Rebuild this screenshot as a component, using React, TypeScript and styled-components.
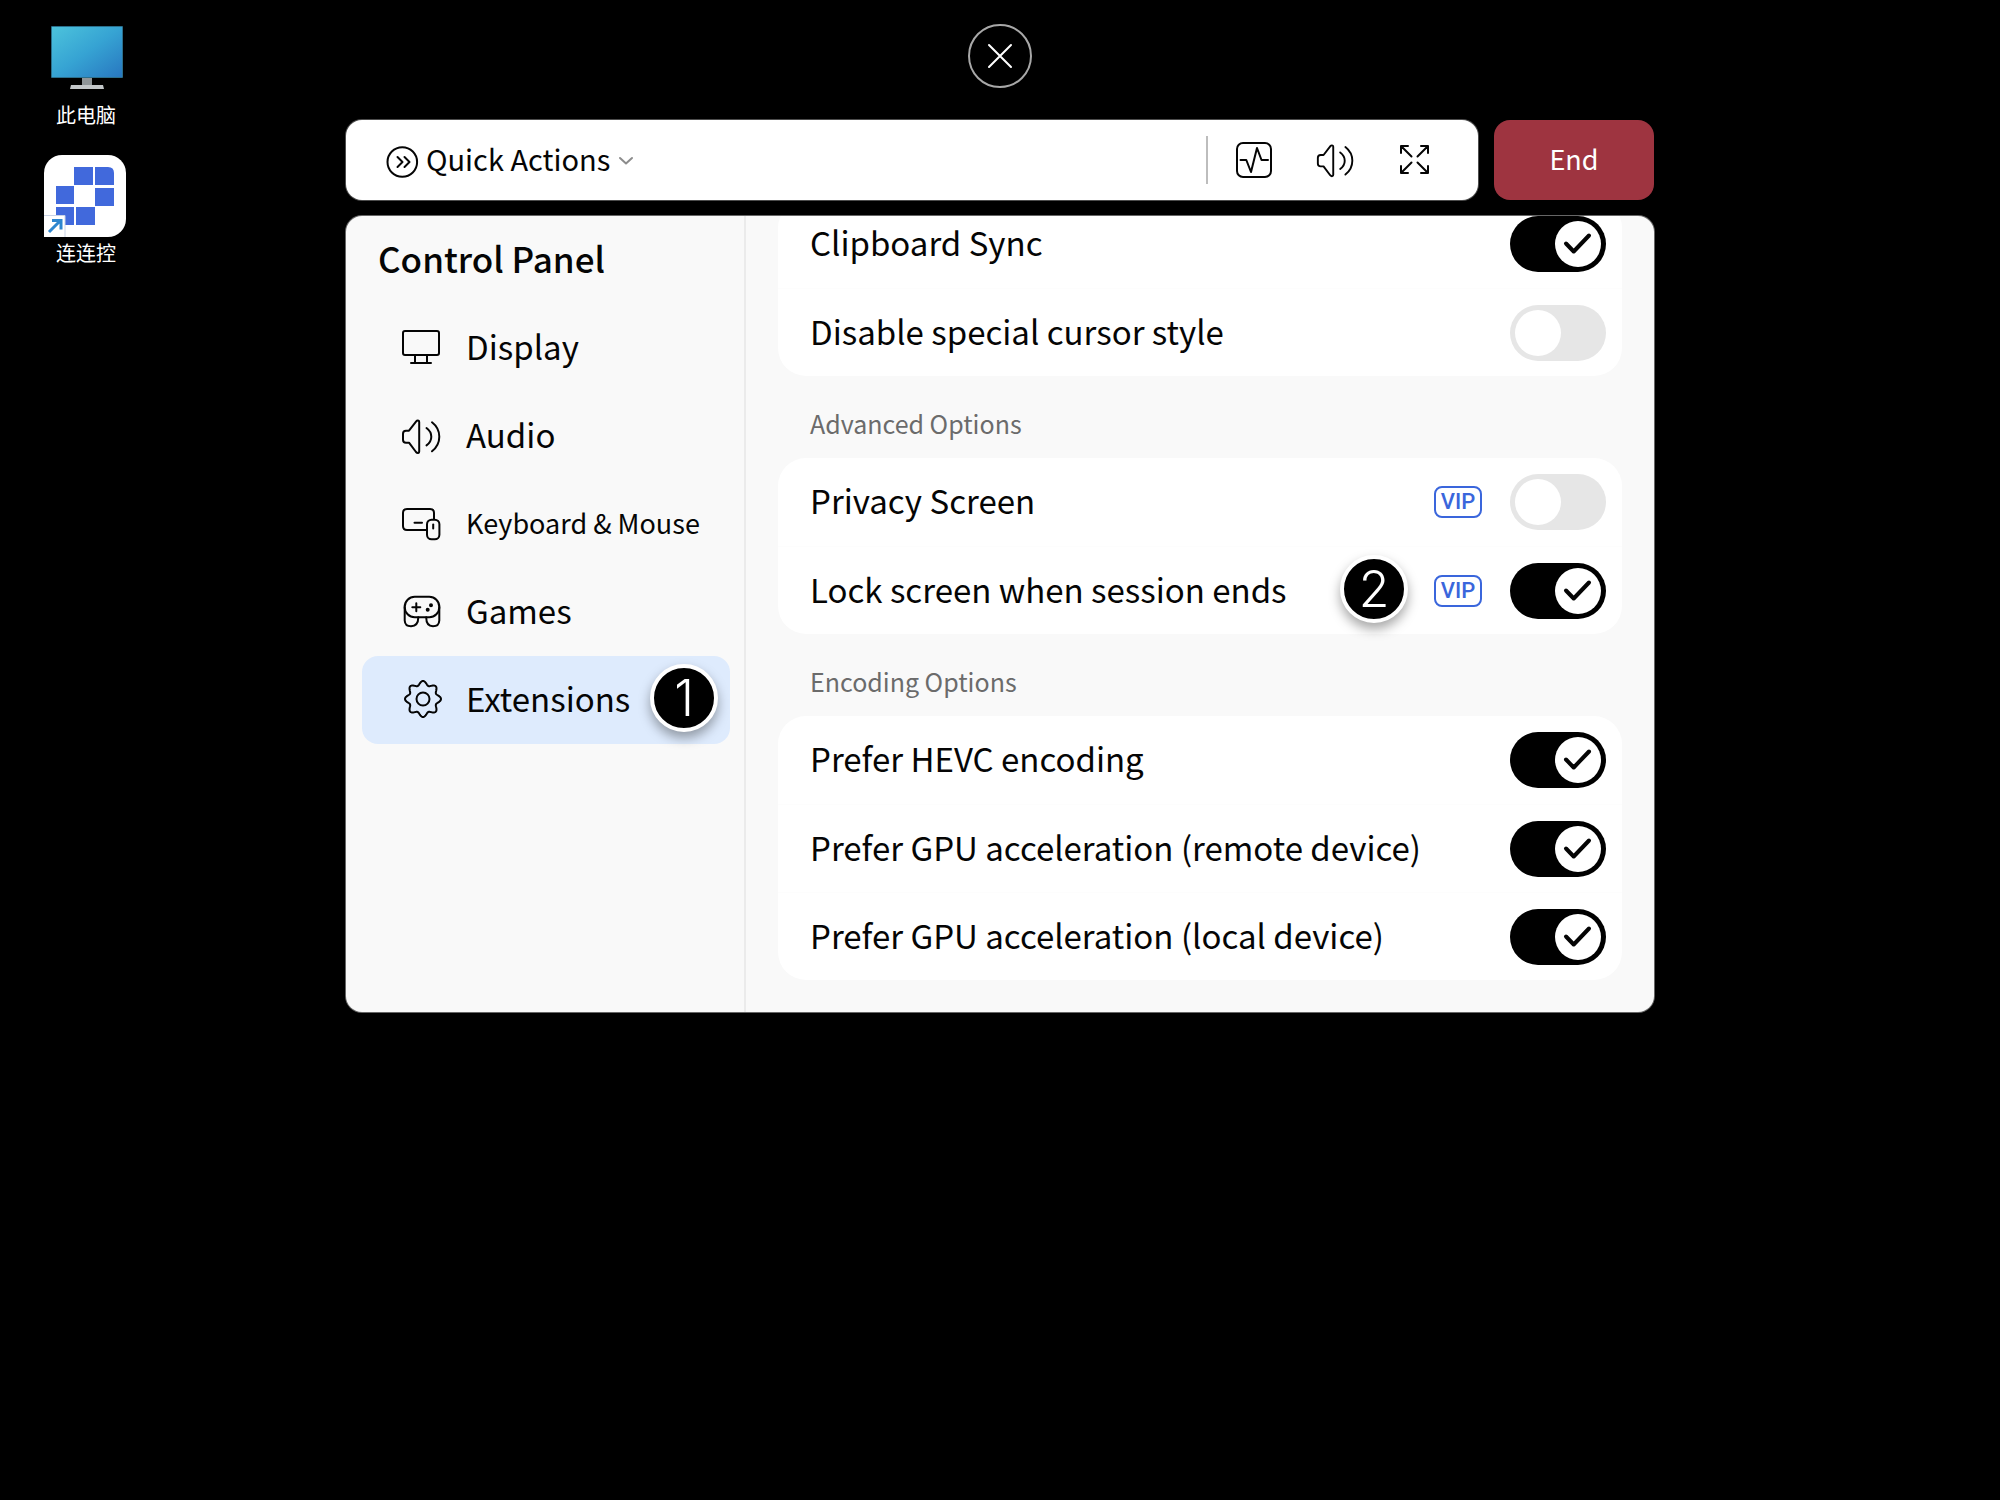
import React, { useState } from "react";
import styled, { createGlobalStyle } from "styled-components";

const GlobalStyle = createGlobalStyle`
  *, *::before, *::after { box-sizing: border-box; }
  body {
    margin: 0;
    background: #000;
    color: #050505;
    font-family: "Noto Sans CJK SC", "Noto Sans", sans-serif;
  }
  button, input { font: inherit; color: inherit; }
  button { cursor: pointer; }
`;

const Screen = styled.div`
  position: relative;
  min-height: 100vh;
  overflow: hidden;
`;

/* Remote desktop that shows behind the session controls */
const Desktop = styled.ul`
  position: absolute;
  top: 24px;
  left: 44px;
  margin: 0;
  padding: 0;
  list-style: none;
  display: flex;
  flex-direction: column;
  gap: 28px;
  color: #fff;
  font-size: 20px;
  line-height: 24px;
`;

const Shortcut = styled.li`
  display: flex;
  flex-direction: column;
  align-items: center;
  width: 84px;
  gap: 4px;
`;

const Overlay = styled.main`
  position: relative;
  width: calc(100% - 400px);
  max-width: 1308px;
  margin: 0 auto;
  padding: 24px 0;
  display: flex;
  flex-direction: column;
  align-items: center;
`;

const CloseButton = styled.button`
  display: grid;
  place-items: center;
  width: 64px;
  height: 64px;
  margin-bottom: 32px;
  padding: 0;
  border: 2px solid #a8a8a8;
  border-radius: 50%;
  background: #000;
  color: #fff;
`;

const TopBar = styled.div`
  display: flex;
  gap: 16px;
  width: 100%;
  margin-bottom: 16px;
`;

const Toolbar = styled.div`
  flex: 1;
  display: flex;
  align-items: center;
  height: 80px;
  padding: 0 40px;
  border-radius: 16px;
  background: #fff;
  box-shadow: 0 0 0 1px rgba(255, 255, 255, 0.3);
`;

const QuickButton = styled.button`
  display: flex;
  align-items: center;
  gap: 8px;
  margin-right: auto;
  padding: 0;
  border: 0;
  background: none;
  font-size: 29px;
  line-height: 40px;
`;

/* The font's line box sits low, so labels carry a little space below */
const ButtonText = styled.span`
  padding-bottom: 4px;
`;

const Separator = styled.span`
  width: 2px;
  height: 48px;
  margin-right: 22px;
  background: #bdbdbd;
`;

const ToolGroup = styled.div`
  display: flex;
  gap: 32px;
`;

const ToolButton = styled.button`
  display: grid;
  place-items: center;
  width: 48px;
  height: 48px;
  padding: 0;
  border: 0;
  background: none;
`;

const EndButton = styled.button`
  width: 160px;
  padding: 0 0 4px;
  border: 0;
  border-radius: 16px;
  background: #9e3440;
  color: #fff;
  font-size: 27px;
`;

const Panel = styled.section`
  display: flex;
  width: 100%;
  overflow: hidden;
  border-radius: 16px;
  background: #f9f9f9;
  box-shadow: 0 0 0 1px rgba(255, 255, 255, 0.4);
`;

const Sidebar = styled.div`
  flex: none;
  width: 400px;
  padding: 0 14px 0 16px;
  border-right: 2px solid #ebebeb;
`;

const Title = styled.h1`
  margin: 0;
  padding: 0 16px 4px;
  font-size: 35px;
  font-weight: 500;
  line-height: 84px;
`;

const NavItem = styled.button<{ $active?: boolean; $small?: boolean }>`
  display: flex;
  align-items: center;
  width: 100%;
  height: 88px;
  padding: 0 12px 0 40px;
  border: 0;
  border-radius: 16px;
  background: ${(p) => (p.$active ? "#deebfd" : "transparent")};
  font-size: ${(p) => (p.$small ? 27 : 33)}px;
  text-align: left;
  white-space: nowrap;
`;

const NavLabel = styled.span`
  flex: 1;
  margin-left: 24px;
  padding-bottom: 4px;
`;

const Settings = styled.div`
  flex: 1;
  min-width: 0;
  overflow: hidden;
`;

/* The list is scrolled a little past the top of its first visible group */
const Scrolled = styled.div`
  margin-top: -16px;
  padding: 0 32px 32px;
`;

const GroupTitle = styled.h2`
  margin: 0;
  padding: 30px 32px 18px;
  color: #6b6b6b;
  font-size: 25px;
  font-weight: 400;
  line-height: 34px;
`;

const Card = styled.div`
  border-radius: 28px;
  background: #fff;
`;

const Row = styled.label`
  display: flex;
  align-items: center;
  height: 88px;
  padding: 0 16px 0 32px;
  font-size: 33px;
  white-space: nowrap;
  cursor: pointer;

  & + & {
    border-top: 1px solid #fdfdfd;
  }
`;

const RowText = styled.span`
  flex: 1;
  padding-bottom: 4px;
`;

const Vip = styled.span`
  display: grid;
  place-items: center;
  width: 48px;
  height: 32px;
  margin: 0 28px 0 26px;
  border: 2px solid #3a66dc;
  border-radius: 8px;
  color: #3a66dc;
  font: 500 22px/28px Roboto, sans-serif;
`;

const Track = styled.span<{ $on: boolean }>`
  position: relative;
  display: flex;
  justify-content: ${(p) => (p.$on ? "flex-end" : "flex-start")};
  width: 96px;
  height: 56px;
  padding: 5px;
  border-radius: 28px;
  background: ${(p) => (p.$on ? "#000" : "#e6e6e6")};
`;

const HiddenCheck = styled.input`
  position: absolute;
  inset: 0;
  width: 100%;
  height: 100%;
  margin: 0;
  opacity: 0;
  cursor: pointer;
`;

const Knob = styled.span`
  width: 46px;
  height: 46px;
  border-radius: 50%;
  background: #fff;
`;

const Step = styled.span`
  display: grid;
  place-items: center;
  flex: none;
  width: 68px;
  height: 68px;
  margin-bottom: 4px;
  border: 4px solid #fff;
  border-radius: 50%;
  background: #000;
  box-shadow: 0 6px 12px rgba(0, 0, 0, 0.35);
  color: #fff;
  font: 300 50px/60px Inter, sans-serif;
`;

const Icon = styled.svg<{ $weight?: number }>`
  display: block;
  flex: none;
  overflow: visible;
  fill: none;
  stroke: currentColor;
  stroke-width: ${(p) => p.$weight ?? 2};
  stroke-linecap: round;
  stroke-linejoin: round;
`;

const ChevronDown = styled(Icon)`
  color: #8c8c8c;
`;

const Art = styled.svg`
  display: block;
  flex: none;
`;

const gearPath = (() => {
  const points: string[] = [];
  for (let i = 0; i < 160; i++) {
    const a = (i / 160) * Math.PI * 2;
    const r = 16 + 2 * Math.cos(8 * a);
    points.push(`${(21 + r * Math.sin(a)).toFixed(2)} ${(19 - r * Math.cos(a)).toFixed(2)}`);
  }
  return `M${points.join("L")}Z`;
})();

const DisplayIcon = () => (
  <Icon width="40" height="40" viewBox="0 0 40 40" aria-hidden>
    <rect x="1" y="3" width="36" height="24" rx="2" />
    <path d="M13 27v8M25 27v8M9 35h20" />
  </Icon>
);

const VolumeIcon = ({ size = 40, inset = 0 }: { size?: number; inset?: number }) => (
  <Icon width={size} height={size} viewBox={`${-inset} 0 40 40`} aria-hidden>
    <path d="M7 14.7H4Q1 14.7 1 17.7V23.7Q1 26.7 4 26.7H7L14 36Q15 37.2 16.2 37Q17.2 36.8 17.2 35.5V6Q17.2 4.7 16.2 4.6Q15 4.4 14.2 5.4Z" />
    <path d="M24.5 12Q29.3 15.5 29.3 20.7T24.5 29.4M30 6.3Q37.3 12 37.3 20.7T30 35.3" />
  </Icon>
);

const KeyboardIcon = () => (
  <Icon width="40" height="40" viewBox="0 0 40 40" aria-hidden>
    <path d="M24 26H5Q1 26 1 22V9Q1 5 5 5H28Q32 5 32 9V15M12.5 18.7H20" />
    <rect x="25" y="15.7" width="12.4" height="19.6" rx="4.6" />
    <path d="M31.2 20.6V24.6" />
  </Icon>
);

const GamepadIcon = () => (
  <Icon width="40" height="40" viewBox="0 0 40 40" aria-hidden>
    <rect x="2.7" y="4.8" width="34.6" height="20.4" rx="10" />
    <path d="M2.7 15V28.5Q3 34.3 9 34.3Q16.3 34 16.3 25.2M37.3 15V28.5Q37 34.3 31 34.3Q24.2 34 24.2 25.2M10.3 15.2H18.3M14.3 11.2V19.2" />
    <circle cx="29" cy="13.2" r="1" />
    <circle cx="25.7" cy="17.8" r="1" />
  </Icon>
);

const GearIcon = () => (
  <Icon width="40" height="40" viewBox="0 0 40 40" aria-hidden>
    <path d={gearPath} />
    <circle cx="21" cy="19" r="6.5" />
  </Icon>
);

const ThisPc = () => (
  <Art width="84" height="75" viewBox="0 0 84 75" aria-hidden>
    <defs>
      <linearGradient id="pc-screen" x1="0" y1="0" x2="1" y2="1">
        <stop offset="0" stopColor="#4cc3dc" />
        <stop offset="0.5" stopColor="#36a3d3" />
        <stop offset="1" stopColor="#2877c0" />
      </linearGradient>
    </defs>
    <rect x="7" y="2" width="72" height="52" rx="1" fill="#2b6f8c" />
    <rect x="8" y="3" width="70" height="50" fill="url(#pc-screen)" />
    <path d="M38 54h10v7H38z" fill="#8f9598" />
    <path d="M27 61h32l1 4H26z" fill="#c3c7c9" />
  </Art>
);

const RemoteApp = () => (
  <Art width="84" height="82" viewBox="0 0 84 82" aria-hidden>
    <rect width="82" height="82" rx="18" fill="#fff" />
    <path
      fill="#4169dc"
      d="M30 12h19v18H30zM51 12h13q6 0 6 6v12H51zM12 31h18v18H12zM51 33h19v18H51zM12 52h18v18H12zM32 52h19v18H32z"
    />
    <path d="M0 60h21v22H0z" fill="#fff" />
    <path d="M21 82V60.5H0" fill="none" stroke="#c9d3e6" />
    <path d="M5 77L16 66M8 65.500h9v9" fill="none" stroke="#2d86cf" strokeWidth="3" />
  </Art>
);

type Setting = { name: string; on: boolean; vip?: boolean; step?: number };

const groups: { title?: string; items: Setting[] }[] = [
  {
    items: [
      { name: "Clipboard Sync", on: true },
      { name: "Disable special cursor style", on: false },
    ],
  },
  {
    title: "Advanced Options",
    items: [
      { name: "Privacy Screen", on: false, vip: true },
      { name: "Lock screen when session ends", on: true, vip: true, step: 2 },
    ],
  },
  {
    title: "Encoding Options",
    items: [
      { name: "Prefer HEVC encoding", on: true },
      { name: "Prefer GPU acceleration (remote device)", on: true },
      { name: "Prefer GPU acceleration (local device)", on: true },
    ],
  },
];

const sections = [
  { name: "Display", icon: <DisplayIcon /> },
  { name: "Audio", icon: <VolumeIcon /> },
  { name: "Keyboard & Mouse", icon: <KeyboardIcon />, small: true },
  { name: "Games", icon: <GamepadIcon /> },
  { name: "Extensions", icon: <GearIcon />, step: 1 },
];

function SettingRow({ item }: { item: Setting }) {
  const [on, setOn] = useState(item.on);
  return (
    <Row>
      <RowText>{item.name}</RowText>
      {item.step && <Step>{item.step}</Step>}
      {item.vip && <Vip>VIP</Vip>}
      <Track $on={on}>
        <HiddenCheck
          type="checkbox"
          role="switch"
          checked={on}
          onChange={(e) => setOn(e.target.checked)}
        />
        <Knob>
          {on && (
            <Icon $weight={4} width="46" height="46" viewBox="0 0 46 46" aria-hidden>
              <path d="M11 22.5L18.7 30.5L34 14.5" />
            </Icon>
          )}
        </Knob>
      </Track>
    </Row>
  );
}

export default function App() {
  const [active, setActive] = useState("Extensions");
  return (
    <Screen>
      <GlobalStyle />
      <Desktop lang="zh-CN">
        <Shortcut>
          <ThisPc />
          此电脑
        </Shortcut>
        <Shortcut>
          <RemoteApp />
          连连控
        </Shortcut>
      </Desktop>
      <Overlay>
        <CloseButton aria-label="Close">
          <Icon width="24" height="24" viewBox="0 0 24 24" aria-hidden>
            <path d="M1 1L23 23M23 1L1 23" />
          </Icon>
        </CloseButton>
        <TopBar>
          <Toolbar>
            <QuickButton>
              <Icon width="32" height="32" viewBox="0 0 32 32" aria-hidden>
                <circle cx="16.3" cy="18" r="14.8" />
                <path d="M11.5 13L16.5 18L11.5 23M18.5 13L23.5 18L18.5 23" />
              </Icon>
              <ButtonText>Quick Actions</ButtonText>
              <ChevronDown width="16" height="16" viewBox="0 0 16 16" aria-hidden>
                <path d="M2 6L8 11.5L14 6" />
              </ChevronDown>
            </QuickButton>
            <Separator />
            <ToolGroup>
              <ToolButton aria-label="Performance">
                <Icon width="40" height="40" viewBox="0 0 40 40" aria-hidden>
                  <rect x="3" y="3" width="34" height="34" rx="6" />
                  <path d="M6.5 20H12.3L17 32L23 8L27.5 20H34" />
                </Icon>
              </ToolButton>
              <ToolButton aria-label="Volume">
                <VolumeIcon size={38} inset={2} />
              </ToolButton>
              <ToolButton aria-label="Full screen">
                <Icon width="40" height="40" viewBox="0 0 40 40" aria-hidden>
                  <path d="M14 6H7V13M7 6L17.5 16.5M27 6H34V13M34 6L23.5 16.5M7 26V33H14M7 33L17.5 22.5M34 26V33H27M34 33L23.5 22.5" />
                </Icon>
              </ToolButton>
            </ToolGroup>
          </Toolbar>
          <EndButton>End</EndButton>
        </TopBar>
        <Panel>
          <Sidebar>
            <Title>Control Panel</Title>
            <nav>
              {sections.map((s) => (
                <NavItem
                  key={s.name}
                  $active={s.name === active}
                  $small={s.small}
                  onClick={() => setActive(s.name)}
                >
                  {s.icon}
                  <NavLabel>{s.name}</NavLabel>
                  {s.step && <Step>{s.step}</Step>}
                </NavItem>
              ))}
            </nav>
          </Sidebar>
          <Settings>
            <Scrolled>
              {groups.map((g, i) => (
                <section key={i}>
                  {g.title && <GroupTitle>{g.title}</GroupTitle>}
                  <Card>
                    {g.items.map((item) => (
                      <SettingRow key={item.name} item={item} />
                    ))}
                  </Card>
                </section>
              ))}
            </Scrolled>
          </Settings>
        </Panel>
      </Overlay>
    </Screen>
  );
}
